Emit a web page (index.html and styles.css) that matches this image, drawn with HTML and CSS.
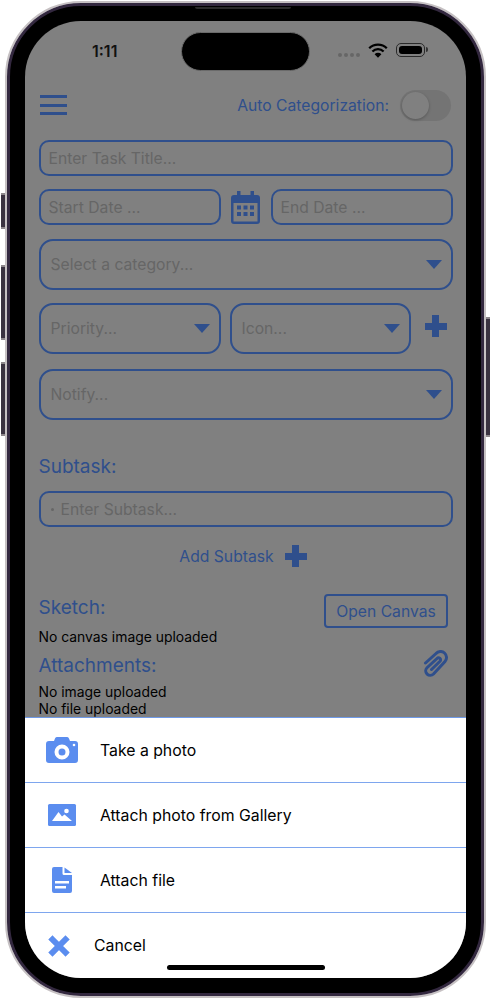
FILE: index.html
```html
<!DOCTYPE html>
<html lang="en">
<head>
    <meta charset="UTF-8">
    <meta name="viewport" content="width=device-width, initial-scale=1.0">
    <title>New Task</title>
    <link rel="stylesheet" href="styles.css">
</head>
<body>
    <div class="phone">
        <span class="side-btn side-mute"></span>
        <span class="side-btn side-up"></span>
        <span class="side-btn side-down"></span>
        <span class="side-btn side-power"></span>
        <div class="bezel">
            <span class="speaker"></span>
            <div class="screen">
                <div class="island"></div>

                <div class="status-bar">
                    <span class="time">1:11</span>
                    <div class="status-icons">
                        <span class="signal"><i></i><i></i><i></i><i></i></span>
                        <svg class="wifi" width="20" height="15" viewBox="0 0 20 15">
                            <path d="M1.2 5.2a12.6 12.6 0 0 1 17.6 0" fill="none" stroke="#000" stroke-width="2.3"/>
                            <path d="M4.4 8.5a8 8 0 0 1 11.2 0" fill="none" stroke="#000" stroke-width="2.3"/>
                            <path d="M6.6 11.2l3.4 3.6 3.4-3.6a4.8 4.8 0 0 0-6.8 0z" fill="#000"/>
                        </svg>
                        <span class="battery"><i></i></span>
                    </div>
                </div>

                <div class="content">
                    <div class="header">
                        <span class="menu"><i></i><i></i><i></i></span>
                        <div class="auto-cat">
                            <span>Auto Categorization:</span>
                            <span class="toggle"><i></i></span>
                        </div>
                    </div>

                    <div class="field field-title">Enter Task Title...</div>

                    <div class="date-row">
                        <div class="field">Start Date ...</div>
                        <svg width="29" height="33" viewBox="0 0 29 33">
                            <path d="M6 0h3.500v4h10V0H23v4h3a3 3 0 0 1 3 3v23a3 3 0 0 1-3 3H3a3 3 0 0 1-3-3V7a3 3 0 0 1 3-3h3zM2.500 12v18.500h24V12z" fill="#2f4f8c" fill-rule="evenodd"/>
                            <path d="M6 14.500h4v4H6zM12.500 14.500h4v4h-4zM19 14.500h4v4h-4zM6 21h4v4H6zM12.500 21h4v4h-4zM19 21h4v4h-4z" fill="#2f4f8c"/>
                        </svg>
                        <div class="field">End Date ...</div>
                    </div>

                    <div class="select select-category">
                        <span>Select a category...</span>
                        <svg class="caret" width="16" height="9" viewBox="0 0 16 9"><path d="M0 0h16L8 9z" fill="#2f4f8c"/></svg>
                    </div>

                    <div class="priority-row">
                        <div class="select">
                            <span>Priority...</span>
                            <svg class="caret" width="16" height="9" viewBox="0 0 16 9"><path d="M0 0h16L8 9z" fill="#2f4f8c"/></svg>
                        </div>
                        <div class="select">
                            <span>Icon...</span>
                            <svg class="caret" width="16" height="9" viewBox="0 0 16 9"><path d="M0 0h16L8 9z" fill="#2f4f8c"/></svg>
                        </div>
                        <span class="plus"></span>
                    </div>

                    <div class="select select-notify">
                        <span>Notify...</span>
                        <svg class="caret" width="16" height="9" viewBox="0 0 16 9"><path d="M0 0h16L8 9z" fill="#2f4f8c"/></svg>
                    </div>

                    <div class="label label-subtask">Subtask:</div>
                    <div class="field field-subtask"><span class="bullet"></span>Enter Subtask...</div>

                    <div class="add-subtask">
                        <span>Add Subtask</span>
                        <span class="plus"></span>
                    </div>

                    <div class="sketch-row">
                        <div class="label">Sketch:</div>
                        <div class="canvas-btn">Open Canvas</div>
                    </div>
                    <div class="note">No canvas image uploaded</div>

                    <div class="attach-row">
                        <div class="label">Attachments:</div>
                        <svg class="clip" width="26" height="29" viewBox="0 0 26 29">
                            <path d="M2.500 13L13 3.500a6 6 0 0 1 9 8L10.500 24a4.500 4.500 0 0 1-6.500-6.300L14 8.500a2 2 0 0 1 3 2.800L8.500 19.500" fill="none" stroke="#2f4f8c" stroke-width="3" stroke-linecap="round"/>
                        </svg>
                    </div>
                    <div class="note note-first">No image uploaded</div>
                    <div class="note">No file uploaded</div>
                </div>

                <div class="sheet">
                    <div class="sheet-row">
                        <svg class="sheet-icon" width="32" height="26" viewBox="0 0 32 26">
                            <path fill-rule="evenodd" fill="#5b8def" d="M11 0h10a2 2 0 0 1 2 1.500L24 4h5a3 3 0 0 1 3 3v16a3 3 0 0 1-3 3H3a3 3 0 0 1-3-3V7a3 3 0 0 1 3-3h5l1-2.500A2 2 0 0 1 11 0zM16 7.500a7.500 7.500 0 1 0 0 15 7.500 7.500 0 0 0 0-15zM16 11.500a3.500 3.500 0 1 1 0 7 3.500 3.500 0 0 1 0-7z"/>
                            <circle cx="28" cy="8" r="1.300" fill="#fff"/>
                        </svg>
                        <span>Take a photo</span>
                    </div>
                    <div class="sheet-row">
                        <svg class="sheet-icon" width="32" height="22" viewBox="0 0 32 22">
                            <rect x="2" width="28" height="22" rx="1.500" fill="#5b8def"/>
                            <path d="M6 17l6.500-9 3.500 4.500 2.500-2 7.500 6.500z" fill="#fff"/>
                            <circle cx="20.500" cy="7" r="2.300" fill="#fff"/>
                        </svg>
                        <span>Attach photo from Gallery</span>
                    </div>
                    <div class="sheet-row">
                        <svg class="sheet-icon" width="32" height="26" viewBox="0 0 32 26">
                            <path fill="#5b8def" d="M8 0h8.500v6.500a1.500 1.500 0 0 0 1.500 1.500h8v16a2 2 0 0 1-2 2H8a2 2 0 0 1-2-2V2a2 2 0 0 1 2-2z"/>
                            <path fill="#5b8def" d="M18.500 0.500L26 6h-7.500z"/>
                            <path fill="#fff" d="M9 14h14v2.500H9zM9 19h11v2.500H9z"/>
                        </svg>
                        <span>Attach file</span>
                    </div>
                    <div class="sheet-row sheet-cancel">
                        <svg class="sheet-icon" width="22" height="22" viewBox="0 0 22 22">
                            <path d="M4.500 4.500l13 13M17.500 4.500l-13 13" stroke="#5b8def" stroke-width="6" stroke-linecap="square" fill="none"/>
                        </svg>
                        <span>Cancel</span>
                    </div>
                </div>

                <div class="home-bar"></div>
            </div>
        </div>
    </div>
</body>
</html>
```

FILE: styles.css
```css
* {
    box-sizing: border-box;
}
body {
    margin: 0;
    background-color: #FFFFFF;
    font-family: Inter, "Liberation Sans", sans-serif;
    color: #000000;
}
.phone {
    position: relative;
    width: 481px;
    height: 997px;
    margin: 1px 5px 0;
    border: 2px solid #c6c1c3;
    border-radius: 76px;
}
.side-btn {
    position: absolute;
    width: 4px;
    background-color: #3a3240;
    border-top: 2px solid #8d878b;
    border-bottom: 2px solid #8d878b;
}
.side-mute {
    left: -6px;
    top: 190px;
    height: 36px;
}
.side-up {
    left: -6px;
    top: 262px;
    height: 75px;
}
.side-down {
    left: -6px;
    top: 359px;
    height: 74px;
}
.side-power {
    right: -6px;
    top: 314px;
    height: 120px;
}
.bezel {
    position: relative;
    height: 100%;
    padding: 15px;
    background-color: #000000;
    border: 3px solid #33283f;
    border-radius: 74px;
}
.speaker {
    position: absolute;
    left: 185px;
    top: 1px;
    width: 96px;
    height: 2px;
    background-color: #2a2a2a;
    border-radius: 0 0 3px 3px;
}
.screen {
    position: relative;
    width: 441px;
    height: 957px;
    overflow: hidden;
    background-color: #808080;
    border-radius: 56px;
}
.island {
    position: absolute;
    left: 156px;
    top: 11px;
    width: 129px;
    height: 39px;
    background-color: #000000;
    border: 1px solid #6a6a6a;
    border-radius: 20px;
}
.status-bar {
    display: flex;
    justify-content: space-between;
    height: 68px;
    padding: 20px 41px 0 67px;
}
.time {
    font-size: 16px;
    font-weight: 600;
    line-height: 20px;
    color: #111111;
}
.status-icons {
    display: flex;
    align-items: flex-start;
    height: 20px;
    padding-top: 2px;
}
.signal {
    display: flex;
    gap: 2px;
    margin-top: 10px;
}
.signal i {
    width: 4px;
    height: 4px;
    background-color: #666666;
    border-radius: 50%;
}
.wifi {
    margin-left: 8px;
}
.battery {
    position: relative;
    width: 29px;
    height: 14px;
    margin-left: 8px;
    padding: 2px;
    border: 1px solid #2a2a2a;
    border-radius: 5px;
}
.battery i {
    display: block;
    width: 100%;
    height: 100%;
    background-color: #000000;
    border-radius: 3px;
}
.battery::after {
    content: "";
    position: absolute;
    right: -4px;
    top: 3px;
    width: 2px;
    height: 5px;
    background-color: #333333;
    border-radius: 0 2px 2px 0;
}
.content {
    padding: 0 13.5px;
}
.header {
    display: flex;
    justify-content: space-between;
    align-items: center;
    height: 32px;
}
.menu {
    display: flex;
    flex-direction: column;
    gap: 5.5px;
    width: 27px;
    margin-left: 1.5px;
}
.menu i {
    height: 3px;
    background-color: #2f4f8c;
}
.auto-cat {
    display: flex;
    align-items: center;
    gap: 11px;
    margin-right: 1.5px;
    font-size: 15.7px;
    color: #2f4f8c;
}
.toggle {
    display: block;
    width: 51px;
    height: 31px;
    padding: 2px;
    background-color: #747474;
    border-radius: 16px;
}
.toggle i {
    display: block;
    width: 27px;
    height: 27px;
    background-color: #808080;
    border-radius: 50%;
    box-shadow: 0 1px 3px rgba(0, 0, 0, 0.25);
}
.field {
    display: flex;
    align-items: center;
    height: 36px;
    padding: 0 8px;
    border: 2px solid #2f4f8c;
    border-radius: 10px;
    font-size: 15.7px;
    color: #666666;
}
.field-title {
    margin-top: 19px;
}
.date-row {
    display: grid;
    grid-template-columns: 1fr 29px 1fr;
    align-items: center;
    gap: 10.5px;
    margin-top: 13px;
}
.select {
    display: flex;
    justify-content: space-between;
    align-items: center;
    height: 51px;
    padding: 0 9px 0 10px;
    border: 2px solid #2f4f8c;
    border-radius: 14px;
    font-size: 15.7px;
    color: #666666;
}
.select-category {
    margin-top: 14px;
}
.priority-row {
    display: grid;
    grid-template-columns: 182px 181px 22px;
    align-items: center;
    column-gap: 9px;
    margin-top: 13px;
}
.priority-row .plus {
    margin-left: 5px;
    margin-top: -5px;
}
.select-notify {
    margin-top: 15px;
}
.plus {
    position: relative;
    display: block;
    width: 22px;
    height: 22px;
}
.plus::before,
.plus::after {
    content: "";
    position: absolute;
    background-color: #2f4f8c;
}
.plus::before {
    left: 7.5px;
    top: 0;
    width: 7px;
    height: 22px;
}
.plus::after {
    left: 0;
    top: 7.5px;
    width: 22px;
    height: 7px;
}
.label {
    font-size: 19px;
    line-height: 24px;
    color: #2f4f8c;
}
.label-subtask {
    margin-top: 35px;
}
.field-subtask {
    margin-top: 12px;
    padding-left: 10px;
}
.bullet {
    width: 3px;
    height: 3px;
    margin-right: 7px;
    background-color: #666666;
    border-radius: 50%;
}
.add-subtask {
    display: flex;
    justify-content: center;
    align-items: center;
    gap: 11px;
    height: 32px;
    margin-top: 13px;
    padding-right: 5px;
    font-size: 15.7px;
    color: #2f4f8c;
}
.sketch-row {
    display: flex;
    justify-content: space-between;
    align-items: flex-start;
    height: 34px;
    margin-top: 22px;
}
.sketch-row .label {
    margin-top: 2px;
}
.canvas-btn {
    display: flex;
    justify-content: center;
    align-items: center;
    width: 124px;
    height: 34px;
    margin-right: 4.5px;
    border: 2px solid #2f4f8c;
    border-radius: 4px;
    font-size: 15.7px;
    color: #2f4f8c;
}
.note {
    height: 18px;
    font-size: 13.9px;
    line-height: 18px;
    color: #000000;
}
.note-first {
    height: 17px;
    margin-top: 4px;
}
.attach-row {
    display: flex;
    justify-content: space-between;
    align-items: center;
    height: 29px;
    margin-top: 4px;
}
.attach-row .label {
    margin-top: 2px;
}
.clip {
    margin-right: 4px;
}
.sheet {
    position: absolute;
    left: 0;
    right: 0;
    bottom: 0;
    height: 261px;
    background-color: #FFFFFF;
    border-top: 1px solid #6f9ae8;
}
.sheet-row {
    display: flex;
    align-items: center;
    gap: 22px;
    height: 65px;
    padding-left: 21px;
    border-bottom: 1px solid #7ea6ee;
    font-size: 15.8px;
}
.sheet-cancel {
    gap: 24px;
    padding-left: 23px;
    border-bottom: none;
}
.home-bar {
    position: absolute;
    left: 142px;
    bottom: 8px;
    width: 158px;
    height: 5px;
    background-color: #000000;
    border-radius: 3px;
}
```
